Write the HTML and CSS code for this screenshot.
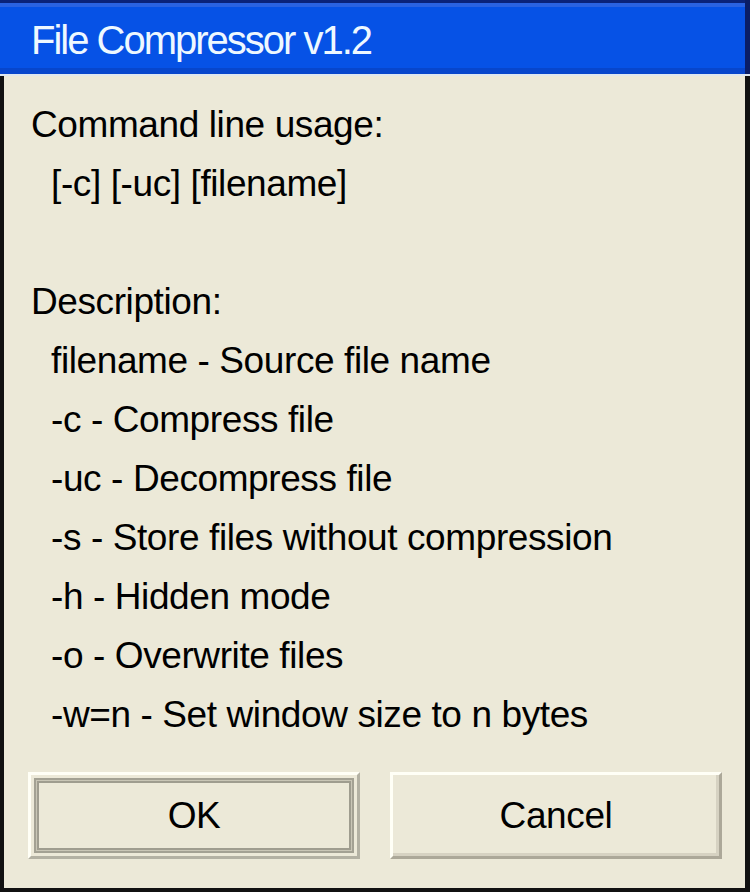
FILE: index.html
```html
<!DOCTYPE html>
<html>
<head>
<meta charset="utf-8">
<link rel="stylesheet" href="styles.css">
</head>
<body>
<div class="window">
  <div class="titlebar"><span class="title">File Compressor v1.2</span></div>
  <div class="client">
    <div class="usage">
      <div class="line">Command line usage:</div>
      <div class="line indent">[-c] [-uc] [filename]</div>
      <div class="line">&nbsp;</div>
      <div class="line">Description:</div>
      <div class="line indent">filename - Source file name</div>
      <div class="line indent">-c - Compress file</div>
      <div class="line indent">-uc - Decompress file</div>
      <div class="line indent">-s - Store files without compression</div>
      <div class="line indent">-h - Hidden mode</div>
      <div class="line indent">-o - Overwrite files</div>
      <div class="line indent">-w=n - Set window size to n bytes</div>
    </div>
    <div class="buttons">
      <button class="btn btn-default">OK</button>
      <button class="btn">Cancel</button>
    </div>
  </div>
</div>
</body>
</html>
```

FILE: styles.css
```css
html, body {
  margin: 0;
  padding: 0;
  background: #ece9d8;
}

.window {
  width: 750px;
  height: 892px;
  box-sizing: border-box;
  display: flex;
  flex-direction: column;
  font-family: "Liberation Sans", Arial, sans-serif;
  color: #000;
}

.titlebar {
  height: 76px;
  box-sizing: border-box;
  padding: 6px 0 0 31px;
  border-bottom: 2px solid #dfe7ee;
  background: linear-gradient(to bottom,
    #0a237a 0px, #0a237a 3px,
    #2a63e2 3px, #2a63e2 7px,
    #0652e6 7px, #0652e6 68px,
    #0746cc 68px, #0746cc 76px);
  box-shadow: inset -5px 0 0 #0a1d66;
}

.title {
  display: block;
  font-size: 40px;
  line-height: 68px;
  letter-spacing: -2px;
  color: #eef8ff;
}

.client {
  flex: 1;
  border-left: 4px solid #111;
  border-right: 5px solid #111;
  border-bottom: 4px solid #111;
  padding: 19px 0 27px 27px;
  display: flex;
  flex-direction: column;
  background: #ece9d8;
}

.usage {
  font-size: 37px;
  line-height: 59px;
  letter-spacing: -0.4px;
  white-space: nowrap;
}

.indent {
  padding-left: 20px;
}

.buttons {
  margin-top: 28px;
  display: flex;
  gap: 30px;
  margin-left: -3px;
}

.btn {
  width: 332px;
  height: 87px;
  box-sizing: border-box;
  padding: 0;
  margin: 0;
  background: #ece9d8;
  font-family: "Liberation Sans", Arial, sans-serif;
  font-size: 37px;
  letter-spacing: -0.4px;
  color: #000;
  border-style: solid;
  border-width: 3px;
  border-color: #fffff6 #aca899 #aca899 #fffff6;
  box-shadow: inset -3px -3px 0 #d6d2c2;
}

.btn-default {
  border-color: #fffff6 #b3b1a3 #b3b1a3 #fffff6;
  box-shadow:
    inset 0 0 0 3px #ece9d8,
    inset 0 0 0 5px #a3a193,
    inset 0 0 0 6px #c9c6b6,
    inset 0 0 0 8px #9f9d8f;
}
```
